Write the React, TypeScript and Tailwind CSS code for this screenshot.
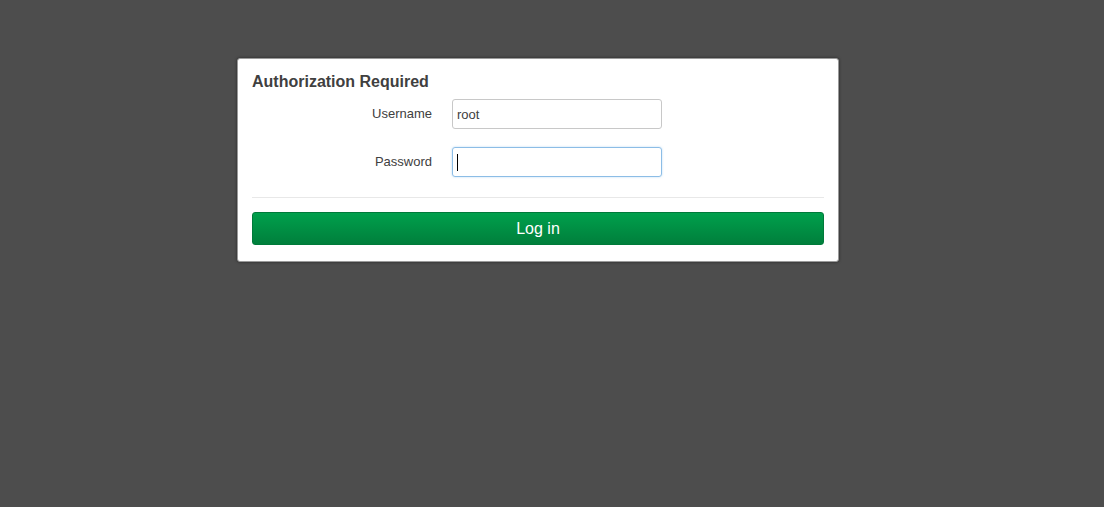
export default function App() {
  return (
    <div className="min-h-[507px] w-full bg-[#4d4d4d] pt-[58px] font-['Liberation_Sans',Arial,sans-serif]">
      <div className="ml-[237px] w-[602px] rounded-[3px] border border-[#9a9a9a] bg-white px-[14px] pt-[13px] pb-[16px] shadow-[0_0_3px_rgba(0,0,0,0.5)]">
        <h2 className="text-[16px] font-bold leading-[20px] text-[#404040]">
          Authorization Required
        </h2>

        <div className="mt-[7px] flex flex-col gap-[18px]">
          <div className="flex items-center">
            <label className="w-[180px] text-right text-[13px] text-[#404040]">Username</label>
            <div className="ml-[20px] flex h-[30px] w-[210px] items-center rounded-[3px] border border-[#c8c8c8] px-[4px] pt-px text-[13px] text-[#404040]">
              root
            </div>
          </div>
          <div className="flex items-center">
            <label className="w-[180px] text-right text-[13px] text-[#404040]">Password</label>
            <div className="ml-[20px] flex h-[30px] w-[210px] items-center rounded-[3px] border border-[#8cbde6] px-[4px] shadow-[0_0_2px_rgba(102,175,233,0.5)]">
              <span className="h-[17px] w-px bg-black" />
            </div>
          </div>
        </div>

        <div className="mt-[20px] border-t border-[#e8e8e8]" />

        <button
          type="button"
          className="mt-[14px] flex h-[33px] w-full items-center justify-center rounded-[3px] border border-[#007a3a] bg-gradient-to-b from-[#00a04c] to-[#007f3c] text-[16px] text-white"
        >
          Log in
        </button>
      </div>
    </div>
  );
}
